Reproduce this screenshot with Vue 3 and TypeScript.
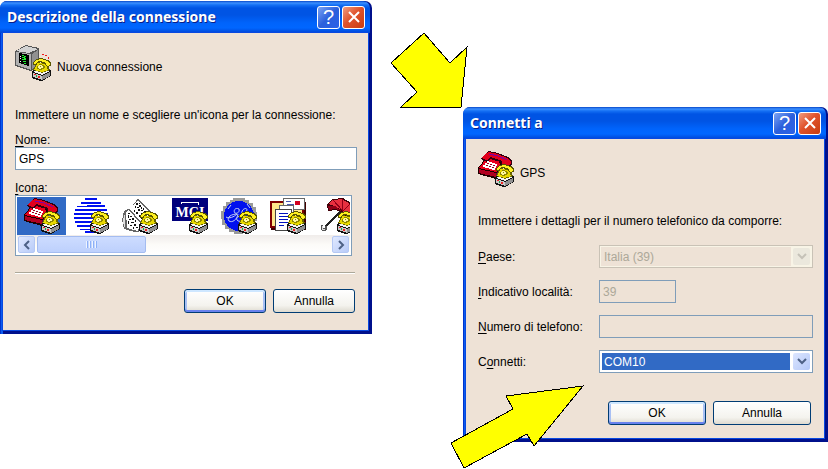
<script setup lang="ts">
import { ref } from 'vue'

interface ConnectionIcon {
  id: string
  label: string
}

const icons: ConnectionIcon[] = [
  { id: 'phone', label: 'Telefono' },
  { id: 'globe', label: 'Globo' },
  { id: 'news', label: 'Notizie' },
  { id: 'mci', label: 'MCI Mail' },
  { id: 'ge', label: 'Monogramma' },
  { id: 'mail', label: 'Posta' },
  { id: 'umbrella', label: 'Ombrello' },
]

const selectedIcon = ref<string>('phone')
const connectionName = ref<string>('GPS')
const country = ref<string>('Italia (39)')
const areaCode = ref<string>('39')
const phoneNumber = ref<string>('')
const port = ref<string>('COM10')
</script>

<template>
  <svg class="sprite" aria-hidden="true">
    <symbol id="mini" viewBox="0 0 36 36">
      <path d="M17 26 23 22 36 25V31L27 36H25L17 33Z" fill="#111" />
      <path d="M18 27 23 23 35 26 27 30Z" fill="#f4f4f4" />
      <path d="M18 28 27 31V35L18 32Z" fill="#c8c8c8" />
      <path d="M27 31 35 27V31L27 35Z" fill="#909090" />
      <path d="M19 29h2v1h-2zM23 31h2v2h-2z" fill="#f02020" />
      <path d="M21 30h1v2h-1z" fill="#20a040" />
      <path d="M22 17 33 19 35 25 27 28 18 25 20 21Z" fill="#6b6700" />
      <path d="M22 18 31 19 33 25 27 27 19 25 21 21Z" fill="#e8d800" />
      <path d="M18 17 22 14 26 13 33 15 36 18V21L32 22 29 18 23 17 22 20H18Z" fill="#5a5600" />
      <path d="M19 17 22 15 26 14 32 16 35 18V20L32 21 30 17 23 16 21 19H19Z" fill="#fff020" />
      <path d="M24 19h3v1h2v1h1v2h-1v1h-2v1h-3v-1h-2v-3h2z" fill="#8c8600" />
      <path d="M24 20h3v1h1v2h-2v1h-2v-1h-1v-2h1z" fill="#fff8a0" />
      <path d="M25 21h1v1h-1z" fill="#8c8600" />
    </symbol>

    <symbol id="phone" viewBox="0 0 36 36">
      <path d="M8 7 23 10 26 16 22 25 18 28 0 23V17Z" fill="#200000" />
      <path d="M9 7 21 10 23 16 18 21 1 17Z" fill="#e8001c" />
      <path d="M1 18 18 22V26L1 22Z" fill="#b00020" />
      <path d="M18 22 23 17V20L18 26Z" fill="#600040" />
      <path d="M3 7 8 2 11 0 20 2 30 6 34 10V14L29 18 23 15V11L12 8 9 11 4 9Z" fill="#300010" />
      <path d="M4 6 9 2 11 1 20 3 29 7 33 11V13L29 16 24 14V10L12 6 9 9 5 8Z" fill="#e0001c" />
      <path d="M11 3 20 5 29 9" fill="none" stroke="#8000a0" />
      <path d="M9 10h2v1h3v1h3v1h2v2h-1v2h-1v2h-3v-1h-3v-1H7v-1H5v-2h2v-2h2z" fill="#fff" />
      <path d="M9 12h2v1H9zM12 13h2v1h-2zM15 14h2v1h-2zM8 14h2v1H8zM11 15h2v1h-2zM14 16h2v1h-2z" fill="#a00020" />
      <use href="#mini" width="36" height="36" />
    </symbol>

    <symbol id="globe" viewBox="0 0 36 36">
      <path
        d="M12 0h12v2H12zM8 4h20v2H8zM4 8h12v1H4zM14 7h18v2H14zM2 11h17v2H2zM19 11h15v2H19zM1 15h34v2H1zM1 19h22v2H1zM2 23h21v2H2zM4 27h15v2H4zM7 31h12v1H7zM12 33h12v2H12z"
        fill="#0010f0"
      />
      <use href="#mini" width="36" height="36" />
    </symbol>

    <symbol id="news" viewBox="0 0 36 36">
      <path d="M16 0 30 15 30 19 17 34 13 34 2 31 0 22 2 13 9 10Z" fill="#666" />
      <path d="M16 2 28 15 19 24 8 11Z" fill="#fff" />
      <path d="M7 12 18 25 16 33 5 30 4 14Z" fill="#fff" />
      <path d="M3 15V30L2 29 1 22Z" fill="#e0e0e0" />
      <path
        d="M14 5h2v2h-2zM17 5h1v1h-1zM13 8h1v2h-1zM15 9h2v1h-2zM17 7h2v2h-2zM19 9h1v2h-1zM16 11h2v2h-2zM19 12h2v1h-2zM21 10h1v2h-1zM22 13h2v2h-2zM19 15h2v2h-2zM24 15h2v1h-2zM22 17h2v1h-2zM12 12h1v2h-1zM14 14h2v2h-2zM17 17h1v2h-1zM19 19h2v2h-2zM6 15h2v1H6zM6 17h1v3H6zM8 18h2v1H8zM10 20h2v2h-2zM7 21h2v1H7zM6 23h1v3H6zM9 24h3v1H9zM13 22h1v2h-1zM8 27h2v1H8zM12 26h2v2h-2zM11 29h1v2h-1zM14 29h2v1h-2z"
        fill="#111"
      />
      <use href="#mini" width="36" height="36" />
    </symbol>

    <symbol id="mci" viewBox="0 0 36 36">
      <path d="M17 27h3v5h-3z" fill="#888" />
      <path d="M0 0h36v23H0z" fill="#00007c" />
      <path d="M9 6V4h17v3" fill="none" stroke="#fff" />
    </symbol>

    <symbol id="ge" viewBox="0 0 36 36">
      <path d="M12 0h12v2h4v3h4v4h3v5h1v9h-2v5h-3v4h-4v3h-5v1h-9v-2H8v-3H4v-4H1v-6H0v-8h2V8h3V4h4V2h3z" fill="#999" />
      <circle cx="18" cy="18" r="15" fill="#0010ee" />
      <g class="smooth" fill="none" stroke="#c4d0f0">
        <path d="M18 11c-4-2-6 2-4 4 2 1 5-1 4-4M16 16c-5 0-11 3-8 7 3 2 8-1 9-7M5 19c3 2 8 0 11-3M19 17c3 0 6-2 7-5 0-3-5-1-5 2 0 5-7 4-5 8 2 3 8 0 9-3M27 15c3 0 4 2 5 3M7 11l3-4M26 6l3 4" />
      </g>
      <use href="#mini" width="36" height="36" />
    </symbol>

    <symbol id="mail" viewBox="0 0 36 36">
      <path d="M1 4h35v28H1z" fill="#400000" />
      <path d="M0 3h34v27H0z" fill="#800000" />
      <path d="M2 5h30v23H2z" fill="#ffe88a" />
      <path d="M13 0h22v12H13z" fill="#666" />
      <path d="M14 1h20v10H14z" fill="#fff" />
      <path d="M25 3h5v4h-5z" fill="#d00020" />
      <path d="M16 3h5v1h-5zM17 6h7v1h-7z" fill="#4858b0" />
      <path d="M9 7h15v23H9z" fill="#666" />
      <path d="M10 8h13v6H10zM21 12h2v17h-2z" fill="#fff" />
      <path d="M5 11h17v22H5z" fill="#444" />
      <path d="M6 12h15v20H6z" fill="#fff" />
      <path d="M9 15h9v1H9zM9 18h9v1H9zM9 21h9v1H9zM9 24h9v1H9zM9 27h5v1H9z" fill="#0010c0" />
      <use href="#mini" width="36" height="36" />
    </symbol>

    <symbol id="umbrella" viewBox="0 0 36 36">
      <path d="M7 7 12 1 23 0 31 5 35 15 28 24 22 14 15 12 8 13Z" fill="#400008" />
      <path d="M8 6 13 2 22 1 30 6 34 15 29 22 23 13 15 8Z" fill="#e83040" />
      <path d="M8 8 15 8 22 13 15 11 9 12Z" fill="#900018" />
      <path d="M13 2 23 13M22 1 23 13M30 6 23 13" stroke="#900018" fill="none" />
      <path d="M20 14 5 29" stroke="#222" stroke-width="2" fill="none" />
      <path d="M1 27h2v3h2v-2h2v3l-2 2H2l-1-2z" fill="#555" />
      <path d="M2 28h1v3h2v1H2z" fill="#ddd" />
      <use href="#mini" width="36" height="36" />
    </symbol>

    <symbol id="computer" viewBox="0 0 36 36">
      <path d="M0 6 11 0 24 3V20L16 26 0 21Z" fill="#555" />
      <path d="M1 6 11 1 23 4 14 8Z" fill="#d2d2d2" />
      <path d="M1 7 16 9V25L1 20Z" fill="#b0b0b0" />
      <path d="M17 9 23 5V19L17 24Z" fill="#909090" />
      <path d="M4 8 14 10V21L4 18Z" fill="#000" />
      <path d="M7 10h2v1H7zM9 11h2v1H9zM7 12h3v1H7zM9 13h2v2H9zM7 14h2v1H7zM8 16h3v1H8zM9 18h2v1H9z" fill="#20f030" />
      <path d="M5 11h1v1H5zM5 16h1v1H5zM5 13h1v1H5z" fill="#fff" />
      <path d="M27 9h2v1h-2zM30 10h2v1h-2zM33 12h1v2h-1zM34 16h1v2h-1z" fill="#f01818" />
      <use href="#mini" width="36" height="36" />
    </symbol>
  </svg>

  <main class="desktop">
    <section class="dialog" aria-labelledby="title-description">
      <header class="title-bar">
        <h1 id="title-description">Descrizione della connessione</h1>
        <button class="caption help" type="button" aria-label="Guida">?</button>
        <button class="caption close" type="button" aria-label="Chiudi">
          <svg viewBox="0 0 14 14"><path d="M2 2 12 12M12 2 2 12" /></svg>
        </button>
      </header>
      <form class="body" @submit.prevent>
        <div class="intro">
          <svg class="icon"><use href="#computer" /></svg>
          <span>Nuova connessione</span>
        </div>
        <p>Immettere un nome e scegliere un'icona per la connessione:</p>
        <label class="stacked" for="name"><u>N</u>ome:</label>
        <input id="name" v-model="connectionName" class="field" type="text" />
        <span id="icon-label" class="stacked"><u>I</u>cona:</span>
        <div class="icon-list">
          <div class="items" role="listbox" aria-labelledby="icon-label">
            <button
              v-for="icon in icons"
              :key="icon.id"
              class="item"
              :class="{ selected: icon.id === selectedIcon }"
              type="button"
              role="option"
              :aria-selected="icon.id === selectedIcon"
              :aria-label="icon.label"
              @click="selectedIcon = icon.id"
            >
              <svg class="icon" viewBox="0 0 36 36">
                <use :href="'#' + icon.id" width="36" height="36" />
                <template v-if="icon.id === 'mci'">
                  <text class="mci-text" x="18" y="19" text-anchor="middle" fill="#fff">MCI</text>
                  <use href="#mini" width="36" height="36" />
                </template>
              </svg>
            </button>
          </div>
          <div class="scrollbar">
            <button class="scroll-arrow" type="button" aria-label="Scorri a sinistra">
              <svg viewBox="0 0 8 10"><path d="M6 1 2 5 6 9" /></svg>
            </button>
            <div class="thumb"><i></i><i></i><i></i><i></i></div>
            <button class="scroll-arrow end" type="button" aria-label="Scorri a destra">
              <svg viewBox="0 0 8 10"><path d="M2 1 6 5 2 9" /></svg>
            </button>
          </div>
        </div>
        <hr />
        <footer class="actions">
          <button class="push default" type="submit">OK</button>
          <button class="push" type="button">Annulla</button>
        </footer>
      </form>
    </section>

    <div class="second">
      <section class="dialog" aria-labelledby="title-connect">
        <header class="title-bar">
          <h1 id="title-connect">Connetti a</h1>
          <button class="caption help" type="button" aria-label="Guida">?</button>
          <button class="caption close" type="button" aria-label="Chiudi">
            <svg viewBox="0 0 14 14"><path d="M2 2 12 12M12 2 2 12" /></svg>
          </button>
        </header>
        <form class="body" @submit.prevent>
          <div class="intro">
            <svg class="icon"><use href="#phone" /></svg>
            <span>{{ connectionName }}</span>
          </div>
          <p>Immettere i dettagli per il numero telefonico da comporre:</p>
          <div class="details">
            <label for="country"><u>P</u>aese:</label>
            <div class="combo disabled">
              <select id="country" v-model="country" disabled>
                <option>Italia (39)</option>
              </select>
              <span class="drop"><svg viewBox="0 0 10 8"><path d="M1 1 5 5 9 1" /></svg></span>
            </div>
            <label for="area"><u>I</u>ndicativo località:</label>
            <input id="area" v-model="areaCode" class="field short" type="text" disabled />
            <label for="number"><u>N</u>umero di telefono:</label>
            <input id="number" v-model="phoneNumber" class="field" type="text" disabled />
            <label for="port">C<u>o</u>nnetti:</label>
            <div class="combo">
              <select id="port" v-model="port">
                <option>COM10</option>
              </select>
              <span class="drop"><svg viewBox="0 0 10 8"><path d="M1 1 5 5 9 1" /></svg></span>
            </div>
          </div>
          <footer class="actions wide">
            <button class="push default" type="submit">OK</button>
            <button class="push" type="button">Annulla</button>
          </footer>
        </form>
      </section>
      <svg class="arrow arrow-top" viewBox="0 0 84 80" aria-hidden="true">
        <path d="M36 3 62 33 79 17 73 77 13 77 29 62 3 33Z" />
      </svg>
      <svg class="arrow arrow-bottom" viewBox="0 0 138 86" aria-hidden="true">
        <path d="M135 3 58 13 65 26 3 60 16 85 79 51 86 63Z" />
      </svg>
    </div>
  </main>
</template>

<style>
body {
  margin: 0;
  background: #fff;
}
</style>

<style scoped>
.sprite {
  position: absolute;
  width: 0;
  height: 0;
}

.mci-text {
  font: bold 14px 'Liberation Serif', serif;
}

.smooth {
  shape-rendering: auto;
}

.desktop {
  display: grid;
  grid-template-columns: 372fr 365fr;
  column-gap: 91px;
  align-items: start;
  box-sizing: border-box;
  min-height: 100vh;
  padding-top: 1px;
  overflow: hidden;
  font: 12px/14px 'Liberation Sans', Arial, sans-serif;
  color: #000;
}

.second {
  position: relative;
  margin-top: 106px;
}

.dialog {
  padding: 0 4px 4px 3px;
  border-radius: 7px 7px 0 0;
  background: linear-gradient(to right, #0034cc 1px, #0a5cf0 1px, #0a5cf0 3px, #00108c 3px);
}

.title-bar {
  display: flex;
  align-items: center;
  gap: 2px;
  box-sizing: border-box;
  height: 32px;
  margin: 0 -2px 0 -3px;
  padding: 0 5px 0 7px;
  border-radius: 7px 7px 0 0;
  background: linear-gradient(#0848c8 0, #3c90ff 2px, #1470f4 4px, #0054e4 7px, #0054e4 14px, #0064fc 22px, #0066ff 27px, #0044d4 32px);
}

h1 {
  flex: 1;
  margin: 0;
  font: bold 14px/18px 'Noto Sans', 'Open Sans', sans-serif;
  color: #fff;
  text-shadow: 1px 1px 0 #0a1e88;
}

.caption {
  display: flex;
  align-items: center;
  justify-content: center;
  box-sizing: border-box;
  width: 23px;
  height: 23px;
  margin: 0;
  padding: 0;
  border: 1px solid #fff;
  border-radius: 3px;
  color: #fff;
}

.help {
  background: linear-gradient(135deg, #7ca4f4, #2c60dc 50%, #2a62e8);
  font: 20px/20px 'Liberation Sans', Arial, sans-serif;
}

.close {
  background: linear-gradient(135deg, #f09c80, #e0532c 45%, #c83c10);
}

.close svg {
  width: 14px;
  height: 14px;
  fill: none;
  stroke: #fff;
  stroke-width: 2;
}

.body {
  display: flex;
  flex-direction: column;
  padding: 12px 11px 17px 12px;
  background: #eee2d6;
  box-shadow: 0 0 0 1px #0848e0;
}

.second .body {
  padding-bottom: 13px;
}

.intro {
  display: flex;
  align-items: center;
  gap: 6px;
  margin-bottom: 27px;
}

.intro span {
  padding-top: 8px;
}

.icon {
  width: 36px;
  height: 36px;
  shape-rendering: crispEdges;
}

p {
  margin: 0;
}

.stacked {
  margin-top: 11px;
}

u {
  text-underline-offset: 2px;
}

.field {
  box-sizing: border-box;
  width: 100%;
  height: 23px;
  margin: 0;
  padding: 0 3px;
  border: 1px solid #7f9db9;
  background: #fff;
  font: inherit;
  color: #000;
}

.field:disabled {
  background: transparent;
  color: #aca899;
}

.short {
  width: 36%;
}

.icon-list {
  margin-right: 5px;
  padding: 1px;
  border: 1px solid #7f9db9;
  background: #fff;
}

.items {
  display: grid;
  grid-auto-flow: column;
  grid-auto-columns: calc(100% * 4 / 27);
  overflow: hidden;
}

.item {
  display: flex;
  justify-content: center;
  padding: 1px 0;
  border: 0;
  background: none;
}

.item .icon {
  flex: none;
}

.selected {
  background: #316ac5;
}

.scrollbar {
  display: flex;
  gap: 2px;
  padding: 1px;
  background: linear-gradient(#f0ecea, #fcfbf8 50%, #fff);
}

.scroll-arrow {
  display: flex;
  align-items: center;
  justify-content: center;
  box-sizing: border-box;
  width: 17px;
  height: 17px;
  padding: 0;
  border: 1px solid #b4c8f4;
  border-radius: 2px;
  background: linear-gradient(135deg, #e0e9ff, #b8cbf8);
}

.scroll-arrow svg {
  width: 8px;
  height: 10px;
  fill: none;
  stroke: #4d6185;
  stroke-width: 2;
}

.end {
  margin-left: auto;
}

.thumb {
  display: flex;
  align-items: center;
  justify-content: center;
  gap: 1px;
  box-sizing: border-box;
  width: 33%;
  border: 1px solid #a4bcf0;
  border-radius: 2px;
  background: linear-gradient(#cddcff, #bdd0fc);
}

.thumb i {
  width: 1px;
  height: 7px;
  border-right: 1px solid #8cb0f8;
  background: #eef4fe;
}

hr {
  width: calc(100% - 2px);
  height: 1px;
  margin: 16px 0 15px;
  border: 0;
  border-top: 1px solid #aca899;
  background: #fff;
}

.actions {
  display: flex;
  justify-content: flex-end;
  gap: 7px;
  padding-right: 2px;
}

.push {
  box-sizing: border-box;
  width: 82px;
  height: 24px;
  padding: 0;
  border: 1px solid #003c74;
  border-radius: 3px;
  background: linear-gradient(#fff, #f4f3ee 70%, #dedad0);
  font: inherit;
  color: #000;
}

.default {
  box-shadow: inset 0 2px 0 #cee7ff, inset 0 -2px 0 #6982ee, inset 2px 0 0 #a8c0f4, inset -2px 0 0 #a8c0f4;
}

.wide {
  margin-top: 28px;
}

.wide .push {
  width: 98px;
}

.details {
  display: grid;
  grid-template-columns: 121px 1fr;
  row-gap: 12px;
  align-items: center;
  margin-top: 17px;
}

.combo {
  display: flex;
  gap: 3px;
  box-sizing: border-box;
  height: 23px;
  padding: 2px;
  border: 1px solid #7f9db9;
  background: #fff;
}

.combo select {
  flex: 1;
  min-width: 0;
  padding: 0 2px;
  border: 0;
  border-radius: 0;
  appearance: none;
  background: #316ac5;
  font: inherit;
  color: #fff;
}

.drop {
  display: flex;
  align-items: center;
  justify-content: center;
  width: 17px;
  border-radius: 2px;
  background: linear-gradient(135deg, #dce6ff, #b4c8f8);
  pointer-events: none;
}

.drop svg {
  width: 10px;
  height: 8px;
  fill: none;
  stroke: #4d6185;
  stroke-width: 2;
}

.disabled {
  border-color: #c9c2b6;
  background: #f8f4e6;
}

.disabled select {
  margin: -1px;
  padding: 0 3px;
  background: #eee2d6;
  color: #aca899;
  opacity: 1;
}

.disabled .drop {
  background: #ebe8dd;
}

.disabled .drop svg {
  stroke: #c5c2b8;
}

.arrow {
  position: absolute;
  fill: #ff0;
  stroke: #000;
  stroke-width: 1;
  pointer-events: none;
  shape-rendering: crispEdges;
}

.arrow-top {
  top: -77px;
  left: -75px;
  width: 84px;
  height: 80px;
}

.arrow-bottom {
  top: 276px;
  left: -15px;
  width: 138px;
  height: 86px;
}
</style>
